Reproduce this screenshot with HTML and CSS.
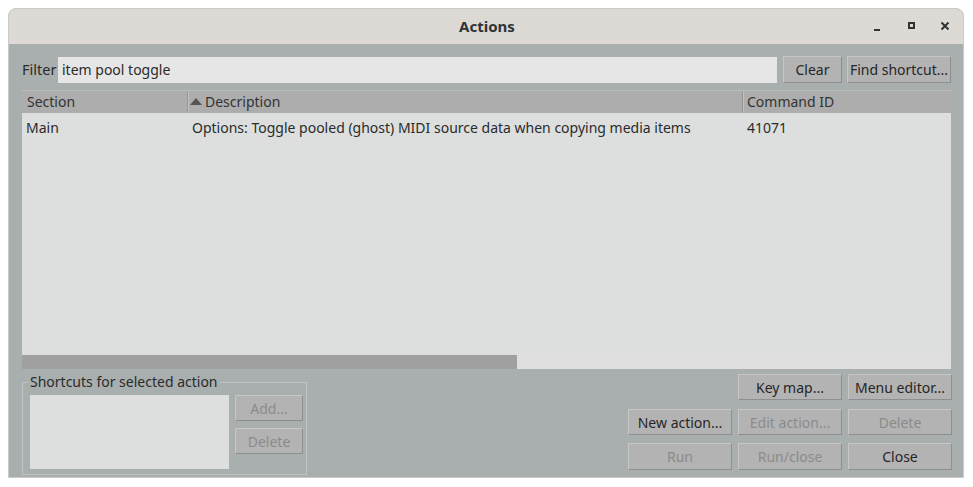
FILE: index.html
```html
<!DOCTYPE html>
<html>
<head>
<meta charset="utf-8">
<link rel="stylesheet" href="styles.css">
</head>
<body>
<div class="window">
  <div class="titlebar">
    <div class="title">Actions</div>
    <div class="controls">
      <svg class="ctl ctl-min" width="12" height="12" viewBox="0 0 12 12"><rect x="3" y="8" width="6" height="2" fill="#2e3436"/></svg>
      <svg class="ctl ctl-max" width="12" height="12" viewBox="0 0 12 12"><rect x="3" y="2" width="5" height="5" fill="none" stroke="#2e3436" stroke-width="2"/></svg>
      <svg class="ctl ctl-close" width="12" height="12" viewBox="0 0 12 12"><path d="M2.5 1.5 L9.5 8.5 M9.5 1.5 L2.5 8.5" stroke="#2e3436" stroke-width="2"/></svg>
    </div>
  </div>
  <div class="content">
    <div class="filter-row">
      <span class="filter-label">Filter</span>
      <div class="filter-input">item pool toggle</div>
      <div class="btn btn-clear">Clear</div>
      <div class="btn btn-find">Find shortcut...</div>
    </div>
    <div class="list">
      <div class="list-head">
        <div class="col col-section">Section</div>
        <div class="col col-desc"><span class="sort-arrow"></span>Description</div>
        <div class="col col-id">Command ID</div>
      </div>
      <div class="list-body">
        <div class="row">
          <div class="cell col-section">Main</div>
          <div class="cell col-desc">Options: Toggle pooled (ghost) MIDI source data when copying media items</div>
          <div class="cell col-id">41071</div>
        </div>
      </div>
      <div class="hscroll"><div class="hthumb"></div></div>
    </div>
    <div class="bottom">
      <fieldset class="group">
        <legend>Shortcuts for selected action</legend>
        <div class="group-inner">
          <div class="shortcut-list"></div>
          <div class="group-buttons">
            <div class="btn btn-small disabled">Add...</div>
            <div class="btn btn-small disabled">Delete</div>
          </div>
        </div>
      </fieldset>
      <div class="button-grid">
        <div class="btn spacer-cell"></div>
        <div class="btn">Key map...</div>
        <div class="btn">Menu editor...</div>
        <div class="btn">New action...</div>
        <div class="btn disabled">Edit action...</div>
        <div class="btn disabled">Delete</div>
        <div class="btn tall disabled">Run</div>
        <div class="btn tall disabled">Run/close</div>
        <div class="btn tall">Close</div>
      </div>
    </div>
  </div>
</div>
</body>
</html>
```

FILE: styles.css
```css
* { box-sizing: border-box; }
html, body { margin: 0; padding: 0; background: #ffffff; }
body {
  font-family: "Noto Sans", "DejaVu Sans", sans-serif;
  font-size: 14px;
  color: #2b2b2b;
}
.window {
  margin: 8px 0 0 8px;
  width: 956px;
  height: 470px;
  border: 1px solid #c9cbca;
  border-radius: 8px 8px 0 0;
  overflow: hidden;
  display: flex;
  flex-direction: column;
  background: #a9afae;
}
.titlebar {
  height: 35px;
  flex: none;
  background: #dddad6;
  display: flex;
  align-items: center;
  justify-content: center;
  position: relative;
}
.title {
  font-weight: bold;
  font-size: 15px;
  color: #2e3436;
  margin-top: -1px;
  margin-left: 2px;
}
.controls {
  position: absolute;
  left: 862px;
  top: 12px;
  display: flex;
}
.ctl { display: block; }
.ctl-max { margin-left: 23px; }
.ctl-close { margin-left: 21px; }
.content {
  flex: 1;
  display: flex;
  flex-direction: column;
  padding: 12px 12px 0 13px;
}
.filter-row {
  display: flex;
  height: 27px;
  align-items: stretch;
}
.filter-label {
  width: 36px;
  line-height: 27px;
  color: #2b2b2b;
  font-size: 14.5px;
}
.filter-input {
  width: 719px;
  height: 26px;
  margin-top: 1px;
  background: #e6e6e6;
  padding-left: 4px;
  line-height: 25px;
  font-size: 14px;
  color: #2b2b2b;
}
.btn {
  background: #b3b3b3;
  border: 1px solid;
  border-color: #c6c6c6 #8e8e8e #8e8e8e #c6c6c6;
  display: flex;
  align-items: center;
  justify-content: center;
  color: #262626;
  font-size: 14px;
  white-space: nowrap;
}
.btn.disabled { color: #8b8b8b; }
.btn-clear { width: 59px; margin-left: 6px; }
.btn-find { width: 104px; margin-left: 5px; }
.list {
  margin-top: 7px;
  height: 279px;
  display: flex;
  flex-direction: column;
  width: 929px;
}
.list-head {
  height: 23px;
  background: #adadad;
  border-top: 1px solid #bcbcbc;
  display: flex;
}
.col {
  line-height: 22px;
  color: #333333;
  font-size: 14px;
  padding-left: 4px;
}
.list-head .col-section { border-right: 1px solid #979797; padding-left: 5px; }
.list-head .col-desc { border-right: 1px solid #979797; border-left: 1px solid #c0c0c0; padding-left: 1px; display: flex; align-items: center; }
.list-head .col-id { border-left: 1px solid #c0c0c0; padding-left: 3px; }
.col-section { width: 166px; flex: none; }
.col-desc { width: 555px; flex: none; }
.col-id { flex: 1; }
.sort-arrow {
  width: 0; height: 0;
  border-left: 6.5px solid transparent;
  border-right: 6.5px solid transparent;
  border-bottom: 7px solid #555555;
  margin-right: 3px;
  margin-bottom: 2px;
}
.list-body {
  height: 242px;
  background: #dcdfde;
  padding-top: 5px;
}
.row { display: flex; height: 20px; line-height: 20px; }
.cell { color: #2b2b2b; font-size: 14px; }
.row .col-section { padding-left: 4px; }
.row .col-desc { padding-left: 4px; }
.row .col-id { padding-left: 4px; }
.hscroll {
  height: 14px;
  background: #dfdfdf;
  display: flex;
}
.hthumb { width: 495px; background: #a0a0a0; }
.bottom {
  display: flex;
  justify-content: space-between;
  padding-top: 5px;
}
.group {
  margin: 0;
  width: 285px;
  height: 101px;
  border: 1px solid #bfc3c2;
  padding: 0 4px 0 7px;
  min-width: 0;
}
.group legend {
  padding: 0 2px;
  margin-left: -2px;
  font-size: 14px;
  line-height: 16px;
  color: #2b2b2b;
}
.group-inner {
  display: flex;
  gap: 6px;
  margin-top: 5px;
}
.shortcut-list {
  width: 199px;
  height: 74px;
  background: #dcdfde;
  flex: none;
}
.group-buttons {
  display: flex;
  flex-direction: column;
  gap: 7px;
}
.btn-small { width: 68px; height: 26px; }
.button-grid {
  display: grid;
  grid-template-columns: 104px 104px 104px;
  grid-template-rows: 26px 35px 35px;
  column-gap: 6px;
  row-gap: 0;
  margin-right: -1px;
}
.button-grid .btn { align-self: end; height: 26px; }
.button-grid .btn.tall { height: 27px; }
.spacer-cell { visibility: hidden; }
```
